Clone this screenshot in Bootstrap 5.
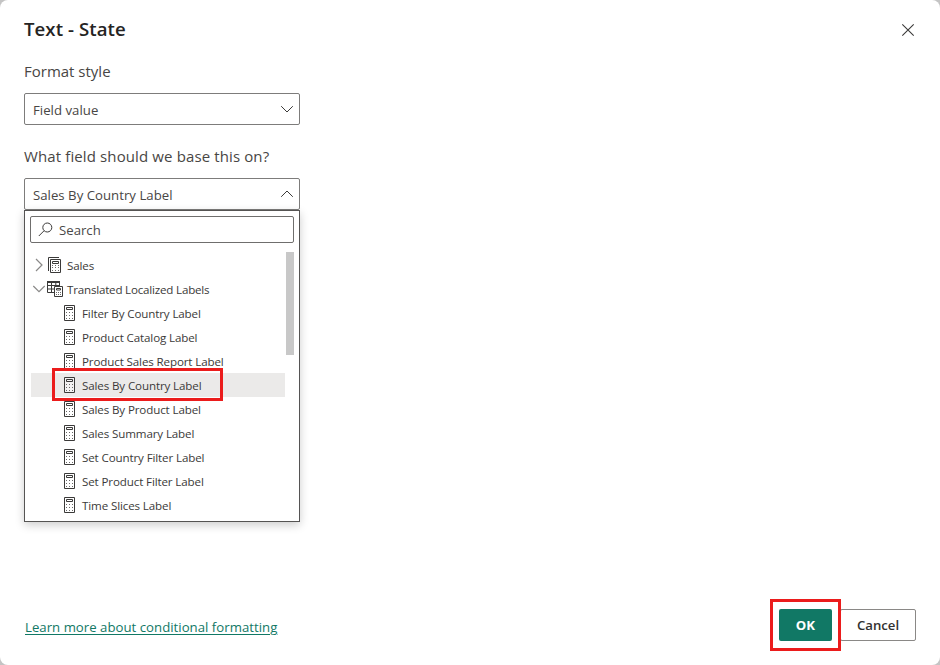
<!DOCTYPE html>
<html lang="en">
<head>
<meta charset="utf-8">
<meta name="viewport" content="width=device-width, initial-scale=1">
<title>Text - State</title>
<link href="https://cdn.jsdelivr.net/npm/bootstrap@5.3.0/dist/css/bootstrap.min.css" rel="stylesheet">
<style>
  body { background: #c4c4c4; font-family: "Open Sans", "Noto Sans", sans-serif; color: #252423; }
  svg { display: block; flex: none; fill: none; stroke: #3b3a39; }
  .dialog { width: 940px; height: 665px; border-radius: 8px; background: #fff; padding: 16px 24px 24px; overflow: hidden; }
  .dialog-title { font-size: 18.6px; font-weight: 600; line-height: 26px; letter-spacing: .07px; }
  .close-btn { width: 14px; height: 14px; margin: 7px 1px 0 0; background: none; }
  .field-label { font-size: 15px; line-height: 22px; letter-spacing: .12px; color: #484644; }
  .format-label { margin-top: 18px; letter-spacing: 0; }
  .base-label { margin-top: 20px; }
  .picker { width: 276px; height: 32px; margin-top: 11px; border: 1px solid #7d7c7b; border-radius: 2px; padding: 3px 5px 0 8px; font-size: 13.2px; letter-spacing: .02px; color: #484644; background: #fff; }
  .picker svg { margin-top: -3px; }
  .picker span { padding-top: 1px; }
  .panel { width: 276px; height: 312px; border: 1px solid #555453; background: #fff; padding: 5px 5px 0; box-shadow: 0 3px 9px rgba(0,0,0,.2); }
  .search-box { height: 27px; border: 1px solid #6f6e6d; border-radius: 2px; font-size: 13.2px; padding: 0 0 0 7px; gap: 6px; color: #4a4948; }
  .search-box span { padding-top: 2px; }
  .tree { width: 254px; margin: 10px 0 0 1px; font-size: 11.6px; letter-spacing: -.13px; color: #3b3a39; }
  .tree li { height: 24px; }
  .tree li > span { padding-top: 1px; }
  .table-name { letter-spacing: -.2px; }
  .leaf { padding-left: 33px; gap: 7px; }
  .chosen { background: #ebeae9; }
  .thumb { width: 8px; height: 103px; background: #c8c8c8; margin: 9px 0 0 1px; }
  .ring { border: 3px solid #eb1c1c; pointer-events: none; }
  .ring-row { left: 21px; top: -5px; width: 171px; height: 33px; }
  .ring-ok { left: -9px; top: -10px; width: 71px; height: 52px; }
  .more-link { color: #117865; font-size: 13.2px; letter-spacing: .02px; margin: 0 0 4px 1px; line-height: 20px; text-underline-offset: 2px; }
  .act { height: 32px; border-radius: 2px; font-size: 13.2px; font-weight: 600; padding: 2px 0 0; }
  .act-ok { width: 53px; background: #117865; color: #fff; font-weight: 700; }
  .act-cancel { width: 76px; border: 1px solid #8a8886; color: #323130; }
</style>
</head>
<body>
<svg width="0" height="0" class="position-absolute" aria-hidden="true">
  <symbol id="calc" viewBox="0 0 11 16">
    <path d="M.5.5h10v15H.5z" fill="#fff" fill-opacity=".4"/>
    <path d="M2.500 2.500h6v2h-6z"/>
    <path stroke="#6a6968" stroke-dasharray="1 2" d="M2 7.500h8M2 10.500h8M2 13.500h8"/>
  </symbol>
</svg>
<main class="dialog d-flex flex-column">
  <header class="d-flex justify-content-between align-items-start">
    <h1 class="dialog-title m-0">Text - State</h1>
    <button class="close-btn border-0 p-0" aria-label="Close"><svg width="14" height="14" viewBox="0 0 14 14"><path stroke-width="1.100" d="M1.300 1.300l11.400 11.400M12.700 1.300L1.300 12.700"/></svg></button>
  </header>

  <div class="field-label format-label">Format style</div>
  <div class="picker d-flex align-items-center justify-content-between">
    <span>Field value</span>
    <svg width="14" height="8" viewBox="0 0 14 8"><path d="M1.200 1.200L7 7l5.800-5.800"/></svg>
  </div>

  <div class="field-label base-label">What field should we base this on?</div>
  <div class="picker d-flex align-items-center justify-content-between">
    <span>Sales By Country Label</span>
    <svg width="14" height="8" viewBox="0 0 14 8"><path d="M1.200 6.800L7 1l5.800 5.800"/></svg>
  </div>

  <div class="panel">
    <div class="search-box d-flex align-items-center">
      <svg width="15" height="15" viewBox="0 0 15 15"><circle cx="9.300" cy="5.500" r="4.500"/><path d="M6 8.800L.8 14"/></svg>
      <span>Search</span>
    </div>
    <div class="d-flex align-items-start">
      <ul class="tree list-unstyled">
        <li class="d-flex align-items-center">
          <svg width="17" height="14" viewBox="0 0 17 14"><path stroke="#8a8988" stroke-width="1.200" d="M5 1l6 6-6 6"/></svg>
          <svg width="19" height="16" viewBox="0 0 19 16"><path d="M.5 14V.5H11"/><path d="M2.500 2.500h10v13h-10z"/><path d="M4.500 4.500h6v2h-6z"/><path stroke="#6a6968" stroke-dasharray="1 2" d="M4 8.500h8M4 10.500h8M4 13.500h8"/></svg>
          <span>Sales</span>
        </li>
        <li class="d-flex align-items-center">
          <svg width="16" height="14" viewBox="0 0 16 14"><path stroke="#8a8988" stroke-width="1.200" d="M2.300 4L8 9.700 13.700 4"/></svg>
          <svg width="20" height="16" viewBox="0 0 20 16"><path d="M.5 1v10.500H7M.5 4.500h12.500M.5 8H7M4.500 2v9.500M8.800 2v2.500M12.500 1v3"/><path stroke-width="2" d="M0 1h13"/><path fill="#fff" d="M7.500 5.500h8v10h-8z"/><path d="M9.500 7.500h4v1.500h-4z"/><path stroke="#6a6968" stroke-dasharray="1 1" d="M9 11.500h5M9 13.500h5"/></svg>
          <span class="table-name">Translated Localized Labels</span>
        </li>
        <li class="leaf d-flex align-items-center"><svg width="11" height="16"><use href="#calc"/></svg><span>Filter By Country Label</span></li>
        <li class="leaf d-flex align-items-center"><svg width="11" height="16"><use href="#calc"/></svg><span>Product Catalog Label</span></li>
        <li class="leaf d-flex align-items-center"><svg width="11" height="16"><use href="#calc"/></svg><span>Product Sales Report Label</span></li>
        <li class="leaf chosen position-relative d-flex align-items-center"><svg width="11" height="16"><use href="#calc"/></svg><span>Sales By Country Label</span><i class="ring ring-row position-absolute z-1"></i></li>
        <li class="leaf d-flex align-items-center"><svg width="11" height="16"><use href="#calc"/></svg><span>Sales By Product Label</span></li>
        <li class="leaf d-flex align-items-center"><svg width="11" height="16"><use href="#calc"/></svg><span>Sales Summary Label</span></li>
        <li class="leaf d-flex align-items-center"><svg width="11" height="16"><use href="#calc"/></svg><span>Set Country Filter Label</span></li>
        <li class="leaf d-flex align-items-center"><svg width="11" height="16"><use href="#calc"/></svg><span>Set Product Filter Label</span></li>
        <li class="leaf d-flex align-items-center"><svg width="11" height="16"><use href="#calc"/></svg><span>Time Slices Label</span></li>
      </ul>
      <div class="thumb"></div>
    </div>
  </div>

  <footer class="d-flex align-items-end justify-content-between mt-auto">
    <a class="more-link" href="#">Learn more about conditional formatting</a>
    <div class="d-flex gap-2">
      <div class="position-relative">
        <button class="btn act act-ok d-block">OK</button>
        <i class="ring ring-ok position-absolute z-1"></i>
      </div>
      <button class="btn act act-cancel">Cancel</button>
    </div>
  </footer>
</main>
</body>
</html>
